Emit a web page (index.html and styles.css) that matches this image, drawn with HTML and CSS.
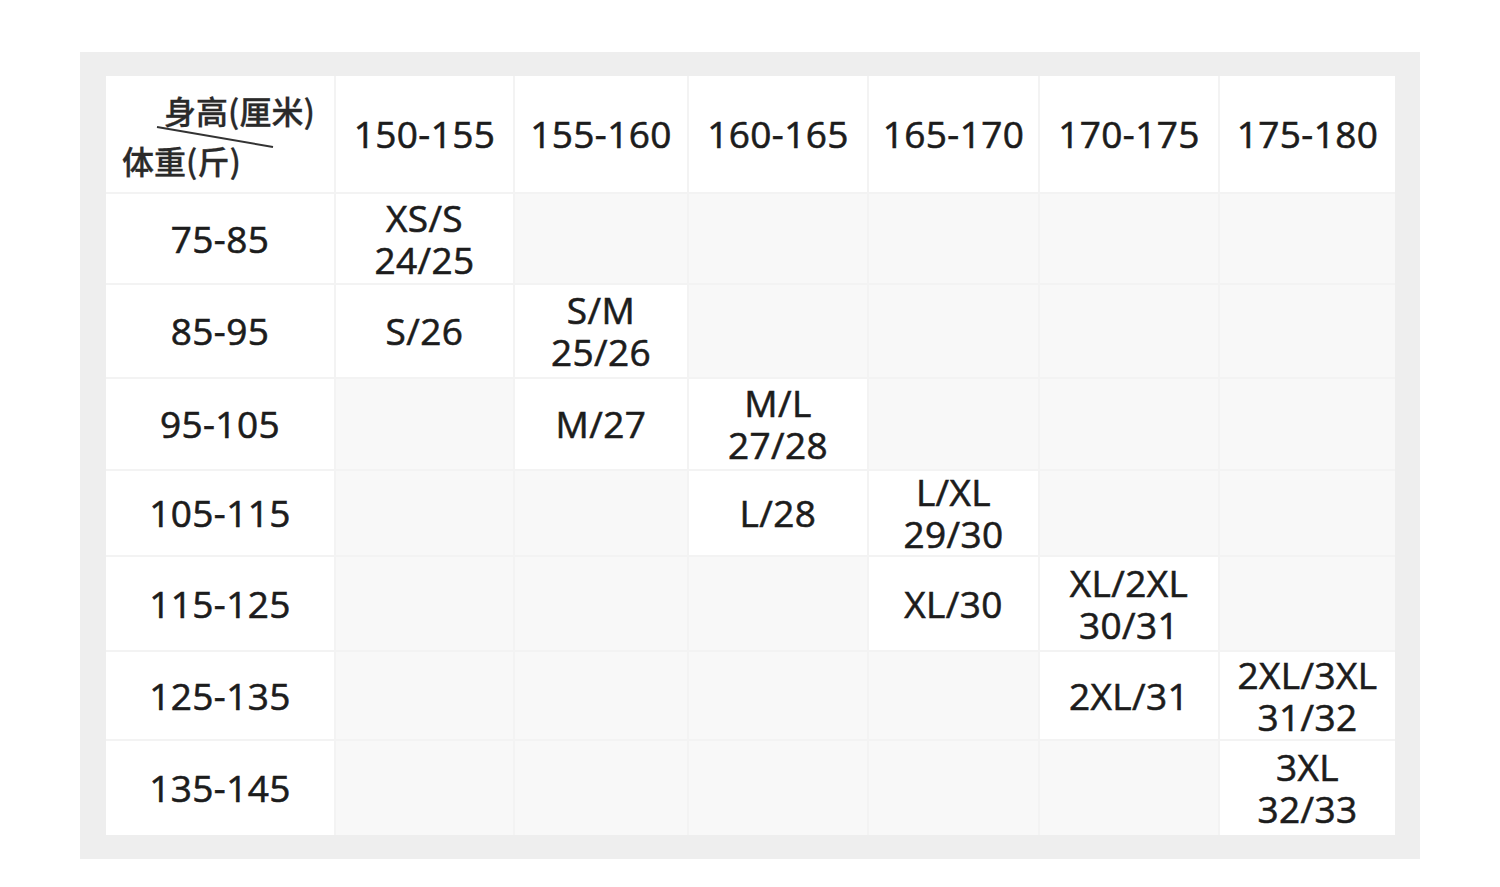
FILE: index.html
```html
<!DOCTYPE html>
<html lang="zh">
<head>
<meta charset="utf-8">
<title>尺码表</title>
<link rel="stylesheet" href="styles.css">
</head>
<body>
<div class="frame">
  <div class="chart">
    <div class="cell corner">
      <svg class="diag" width="228" height="116" viewBox="0 0 228 116"><line x1="51" y1="51" x2="167" y2="71" stroke="#333" stroke-width="2"/></svg>
      <span class="top-label">身高(厘米)</span>
      <span class="bottom-label">体重(斤)</span>
    </div>
    <div class="cell">150-155</div>
    <div class="cell">155-160</div>
    <div class="cell">160-165</div>
    <div class="cell">165-170</div>
    <div class="cell">170-175</div>
    <div class="cell">175-180</div>

    <div class="cell">75-85</div>
    <div class="cell">XS/S<br>24/25</div>
    <div class="cell empty"></div><div class="cell empty"></div><div class="cell empty"></div><div class="cell empty"></div><div class="cell empty"></div>

    <div class="cell">85-95</div>
    <div class="cell">S/26</div>
    <div class="cell">S/M<br>25/26</div>
    <div class="cell empty"></div><div class="cell empty"></div><div class="cell empty"></div><div class="cell empty"></div>

    <div class="cell">95-105</div>
    <div class="cell empty"></div>
    <div class="cell">M/27</div>
    <div class="cell">M/L<br>27/28</div>
    <div class="cell empty"></div><div class="cell empty"></div><div class="cell empty"></div>

    <div class="cell">105-115</div>
    <div class="cell empty"></div><div class="cell empty"></div>
    <div class="cell">L/28</div>
    <div class="cell">L/XL<br>29/30</div>
    <div class="cell empty"></div><div class="cell empty"></div>

    <div class="cell">115-125</div>
    <div class="cell empty"></div><div class="cell empty"></div><div class="cell empty"></div>
    <div class="cell">XL/30</div>
    <div class="cell">XL/2XL<br>30/31</div>
    <div class="cell empty"></div>

    <div class="cell">125-135</div>
    <div class="cell empty"></div><div class="cell empty"></div><div class="cell empty"></div><div class="cell empty"></div>
    <div class="cell">2XL/31</div>
    <div class="cell">2XL/3XL<br>31/32</div>

    <div class="cell">135-145</div>
    <div class="cell empty"></div><div class="cell empty"></div><div class="cell empty"></div><div class="cell empty"></div><div class="cell empty"></div>
    <div class="cell">3XL<br>32/33</div>
  </div>
</div>
</body>
</html>
```

FILE: styles.css
```css
html, body {
  margin: 0;
  padding: 0;
  background: #ffffff;
}

body {
  font-family: "Open Sans", "Noto Sans", "Noto Sans CJK SC", sans-serif;
  color: #1c1c1c;
}

.frame {
  margin: 52px 0 0 80px;
  width: 1340px;
  box-sizing: border-box;
  padding: 24px 25px 24px 26px;
  background: #eeeeee;
}

.chart {
  display: grid;
  grid-template-columns: 228px 177px 172px 178px 169px 178px 175px;
  grid-template-rows: 116px 89px 92px 90px 84px 93px 87px 94px;
  gap: 2px;
  background: #f3f3f3;
}

.cell {
  background: #ffffff;
  display: flex;
  align-items: center;
  justify-content: center;
  text-align: center;
  font-size: 37px;
  font-weight: 500;
  line-height: 42px;
  letter-spacing: 0.4px;
  -webkit-text-stroke: 0.6px #1c1c1c;
}

.cell.empty {
  background: #f8f8f8;
}

.corner {
  position: relative;
  flex-direction: column;
  align-items: flex-start;
  justify-content: flex-start;
  text-align: left;
  font-family: "Noto Sans CJK SC", sans-serif;
  font-size: 32px;
  font-weight: 500;
  line-height: 40px;
  letter-spacing: 0;
  color: #2a2a2a;
  -webkit-text-stroke: 0.3px #2a2a2a;
}

.diag {
  position: absolute;
  left: 0;
  top: 0;
}

.top-label {
  margin: 14px 0 0 58px;
}

.bottom-label {
  margin: 10px 0 0 16px;
}
```
